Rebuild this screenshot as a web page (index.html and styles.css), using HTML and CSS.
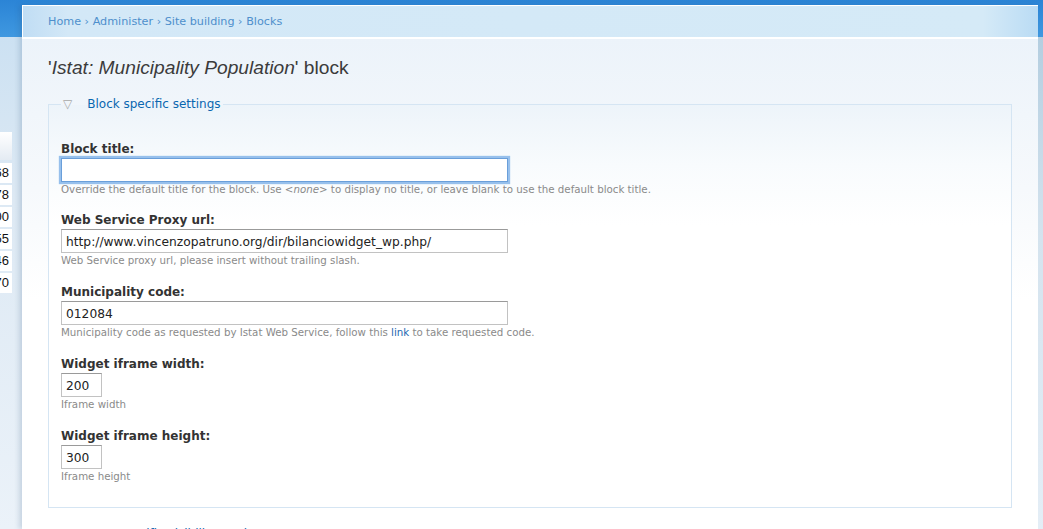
FILE: index.html
```html
<!DOCTYPE html>
<html>
<head>
<meta charset="utf-8">
<link rel="stylesheet" href="styles.css">
</head>
<body>
<div class="page">
  <aside class="sidebar">
    <div class="stats">
      <div class="stats-head"></div>
      <div class="stats-row">1268</div>
      <div class="stats-row">1478</div>
      <div class="stats-row">2100</div>
      <div class="stats-row">3055</div>
      <div class="stats-row">1346</div>
      <div class="stats-row">2170</div>
    </div>
  </aside>
  <main class="panel">
    <div class="crumbs">
      <a href="#">Home</a> › <a href="#">Administer</a> › <a href="#">Site building</a> › <a href="#">Blocks</a>
    </div>
    <div class="content">
      <h2 class="title">'<em>Istat: Municipality Population</em>' block</h2>
      <fieldset class="group">
        <legend class="legend"><span class="tri">▽</span><a href="#">Block specific settings</a></legend>
        <div class="item item-first">
          <label class="label">Block title:</label>
          <input class="field field-wide field-focus" type="text" value="">
          <div class="desc">Override the default title for the block. Use <em>&lt;none&gt;</em> to display no title, or leave blank to use the default block title.</div>
        </div>
        <div class="item">
          <label class="label">Web Service Proxy url:</label>
          <input class="field field-wide" type="text" value="http://www.vincenzopatruno.org/dir/bilanciowidget_wp.php/">
          <div class="desc">Web Service proxy url, please insert without trailing slash.</div>
        </div>
        <div class="item">
          <label class="label">Municipality code:</label>
          <input class="field field-wide" type="text" value="012084">
          <div class="desc">Municipality code as requested by Istat Web Service, follow this <a href="#">link</a> to take requested code.</div>
        </div>
        <div class="item">
          <label class="label">Widget iframe width:</label>
          <input class="field field-small" type="text" value="200">
          <div class="desc">Iframe width</div>
        </div>
        <div class="item item-last">
          <label class="label">Widget iframe height:</label>
          <input class="field field-small" type="text" value="300">
          <div class="desc">Iframe height</div>
        </div>
      </fieldset>
      <fieldset class="group group-next">
        <legend class="legend"><span class="tri">▽</span><a href="#">User specific visibility settings</a></legend>
      </fieldset>
    </div>
  </main>
  <div class="edge"></div>
</div>
</body>
</html>
```

FILE: styles.css
```css
html, body {
  margin: 0;
  padding: 0;
  height: 529px;
  overflow: hidden;
}
body {
  background: linear-gradient(to bottom, #2b84d6 0px, #3f98e0 37px, #cce1f2 37px, #dde9f4 200px, #ebf2f9 529px);
  font-family: "DejaVu Sans", Verdana, sans-serif;
  color: #333;
}
.page {
  display: flex;
  height: 529px;
}
.sidebar {
  width: 22px;
  flex: none;
  padding-top: 132px;
  box-sizing: border-box;
}
.stats {
  width: 12px;
  overflow: hidden;
  display: flex;
  flex-direction: column;
  align-items: flex-end;
}
.stats-head {
  width: 12px;
  height: 28px;
  background: linear-gradient(to bottom, #ffffff, #e4ebf3);
  margin-bottom: 3px;
}
.stats-row {
  flex: none;
  height: 20px;
  margin-bottom: 2px;
  padding: 0 3px 0 6px;
  background: #fff;
  font-family: "Liberation Sans", Arial, sans-serif;
  font-size: 13px;
  line-height: 20px;
  color: #111;
  text-align: right;
}
.panel {
  width: 1016px;
  flex: none;
  margin-top: 5px;
  display: flex;
  flex-direction: column;
  box-shadow: -3px 0 5px rgba(40, 80, 120, 0.18);
}
.crumbs {
  height: 31px;
  border-top: 1px solid #fff;
  border-left: 1px solid #fff;
  border-bottom: 2px solid #fff;
  box-sizing: content-box;
  padding-left: 25px;
  background: linear-gradient(to right, #c0ddf4 0px, #d3e8f7 45px, #d5eaf7 960px, #b9dbf4 1016px);
  font-size: 11.2px;
  line-height: 32px;
  color: #4e8fcc;
}
.crumbs a {
  color: #4e8fcc;
  text-decoration: none;
}
.content {
  flex: 1;
  padding: 17px 26px 0 26px;
  background: linear-gradient(to bottom, #ecf3fa 0px, #f6f9fc 150px, #ffffff 260px);
}
.title {
  margin: 0;
  font-family: "Liberation Sans", Arial, sans-serif;
  font-weight: normal;
  font-size: 19.2px;
  line-height: 24px;
  color: #3b3b3b;
}
.group {
  margin: 16px 0 0 0;
  padding: 29px 12px 24px 12px;
  border: 1px solid #d5e5f3;
  background: linear-gradient(to bottom, #edf4fa 0px, #f8fbfd 60px, #ffffff 120px);
}
.legend {
  padding: 0 2px 0 2px;
  font-size: 12px;
  line-height: 16px;
}
.legend a {
  color: #0a67b0;
  text-decoration: none;
}
.tri {
  color: #a8a8a8;
  font-size: 12px;
  margin-right: 15px;
}
.item {
  margin-bottom: 17px;
}
.item-first {
  margin-bottom: 16px;
}
.item-last {
  margin-bottom: 0;
}
.label {
  display: block;
  font-weight: bold;
  font-size: 12px;
  line-height: 16px;
  margin-bottom: 1px;
  color: #333;
}
.field {
  display: block;
  box-sizing: border-box;
  height: 24px;
  margin: 0;
  padding: 2px 4px 0 4px;
  border: 1px solid #c2c2c2;
  border-top-color: #9a9a9a;
  background: #fff;
  font-family: "DejaVu Sans", Verdana, sans-serif;
  font-size: 12.25px;
  color: #222;
  outline: none;
}
.field-wide {
  width: 447px;
}
.field-small {
  width: 41px;
}
.field-focus {
  border: 1px solid #6a9fda;
  box-shadow: 0 0 1px 2px #97c0ec;
}
.desc {
  font-size: 10.25px;
  line-height: 14px;
  color: #8a8a8a;
}
.desc a {
  color: #1a67b0;
  text-decoration: none;
}
.group-next {
  margin-top: 18px;
  padding: 0 12px;
  border-color: transparent;
  background: none;
}
.edge {
  flex: 1;
  margin-top: 37px;
  background: linear-gradient(to bottom, #b4cee0 0px, #d4e3ee 200px, #e6eff7 529px);
}
```
